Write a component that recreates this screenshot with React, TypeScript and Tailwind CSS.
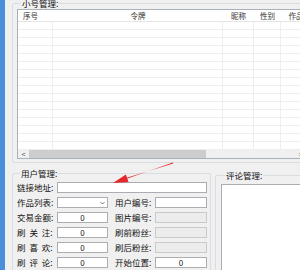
const font = { fontFamily: '"Noto Sans CJK SC", "Noto Sans", sans-serif' };

const rows = Array.from({ length: 16 }, (_, i) => i);

const Box = ({ value = "", gray = false, className = "" }) => (
  <div
    className={`h-[11px] border flex items-center justify-center text-[8px] leading-none text-[#222] ${
      gray ? "bg-[#ececec] border-[#c9c9c9]" : "bg-white border-[#abadb3]"
    } ${className}`}
  >
    {value}
  </div>
);

const Label = ({ text, className = "" }) => (
  <span className={`text-[8.5px] leading-none text-[#111] whitespace-pre ${className}`}>{text}</span>
);

const Arrow = () => (
  <svg className="absolute left-0 top-0 pointer-events-none" width="300" height="270">
    <polygon points="124.7,179.5 127.6,177.6 173.2,163.6 172.8,162.4" fill="#e5262b" />
    <polygon points="113,183 128.5,182.1 125.9,174.5" fill="#e5262b" />
  </svg>
);

export default function App() {
  return (
    <div className="relative w-[300px] h-[270px] overflow-hidden bg-[#f0f0f0] flex" style={font}>
      <div className="w-[5px] shrink-0 bg-[#4a8fdc]" />
      <div className="flex flex-col pl-[7px] shrink-0 w-[320px]">
        {/* 小号管理 */}
        <fieldset className="-mt-[2px] border border-[#d8dde2] rounded-[2px] pl-[4px] pb-[3px] pt-[1px] w-[310px]">
          <legend className="ml-[4px] px-[1px] text-[8.5px] leading-[10px] text-[#111]">小号管理:</legend>
          <div className="border border-[#a9b2bc] bg-white h-[150px] flex flex-col text-[7.5px] text-[#333]">
            <div className="flex h-[12px] border-b border-[#e5e5e5] items-center shrink-0">
              <div className="w-[35px] pl-[5px]">序号</div>
              <div className="w-[170px] text-center">令牌</div>
              <div className="w-[31px] text-center">昵称</div>
              <div className="w-[27px] text-center">性别</div>
              <div className="w-[30px] text-center">作品</div>
            </div>
            <div className="flex-1 flex flex-col overflow-hidden">
              {rows.map((r) => (
                <div key={r} className="flex h-[8px] shrink-0 border-b border-[#eeeeee]">
                  <div className="w-[35px] border-r border-[#eeeeee]" />
                  <div className="w-[170px] border-r border-[#eeeeee]" />
                  <div className="w-[31px] border-r border-[#eeeeee]" />
                  <div className="w-[27px] border-r border-[#eeeeee]" />
                  <div className="w-[30px]" />
                </div>
              ))}
            </div>
            <div className="h-[8px] shrink-0 flex items-center bg-[#f0f0f0] text-[7px] text-[#555]">
              <div className="w-[11px] text-center leading-none">&lt;</div>
              <div className="w-[177px] h-full bg-[#cdcdcd]" />
              <div className="w-[90px]" />
              <div className="w-[10px] text-center leading-none">&gt;</div>
            </div>
          </div>
        </fieldset>

        <div className="flex gap-[4px] mt-[5px] items-start">
          {/* 用户管理 */}
          <fieldset className="w-[199px] shrink-0 border border-[#d8dde2] rounded-[2px] pl-[4px] pr-[3px] pt-[4px] h-[110px]">
            <legend className="ml-[3px] px-[1px] text-[8.5px] leading-[10px] text-[#111]">用户管理:</legend>
            <div className="flex flex-col gap-[4px]">
              <div className="flex items-center">
                <Label text="链接地址:" className="w-[40px]" />
                <Box className="w-[150px]" />
              </div>
              <div className="flex items-center">
                <Label text="作品列表:" className="w-[40px]" />
                <div className="w-[51px] h-[11px] border border-[#abadb3] bg-white flex items-center justify-end pr-[2px]">
                  <svg width="5" height="4" viewBox="0 0 5 4">
                    <path d="M0.5 1 L2.5 3 L4.5 1" fill="none" stroke="#555" strokeWidth="0.8" />
                  </svg>
                </div>
                <Label text="用户编号:" className="w-[40px] ml-[7px]" />
                <Box className="w-[52px]" />
              </div>
              <div className="flex items-center">
                <Label text="交易金额:" className="w-[40px]" />
                <Box value="0" className="w-[51px]" />
                <Label text="图片编号:" className="w-[40px] ml-[7px]" />
                <Box gray className="w-[52px]" />
              </div>
              <div className="flex items-center">
                <Label text="刷 关 注:" className="w-[40px] [word-spacing:2px]" />
                <Box value="0" className="w-[51px]" />
                <Label text="刷前粉丝:" className="w-[40px] ml-[7px]" />
                <Box gray className="w-[52px]" />
              </div>
              <div className="flex items-center">
                <Label text="刷 喜 欢:" className="w-[40px] [word-spacing:2px]" />
                <Box value="0" className="w-[51px]" />
                <Label text="刷后粉丝:" className="w-[40px] ml-[7px]" />
                <Box gray className="w-[52px]" />
              </div>
              <div className="flex items-center">
                <Label text="刷 评 论:" className="w-[40px] [word-spacing:2px]" />
                <Box value="0" className="w-[51px]" />
                <Label text="开始位置:" className="w-[40px] ml-[7px]" />
                <Box value="0" className="w-[52px]" />
              </div>
            </div>
          </fieldset>

          {/* 评论管理 */}
          <fieldset className="mt-[2px] w-[100px] shrink-0 border border-[#d8dde2] rounded-[2px] pl-[5px] pt-[4px] h-[110px]">
            <legend className="ml-[4px] px-[1px] text-[8.5px] leading-[10px] text-[#111]">评论管理:</legend>
            <div className="h-[100px] bg-white border border-[#abadb3]" />
          </fieldset>
        </div>
      </div>
      <Arrow />
    </div>
  );
}
